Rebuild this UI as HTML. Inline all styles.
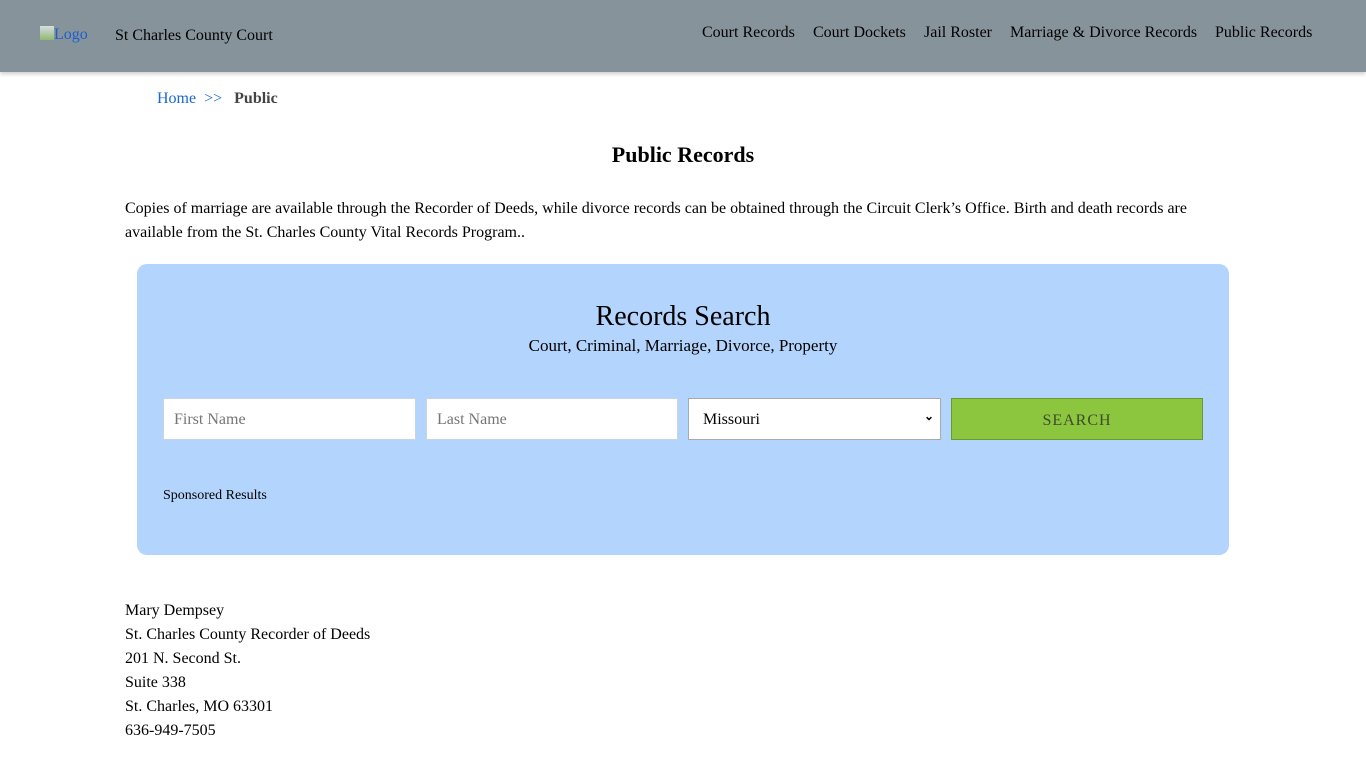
<!DOCTYPE html>
<html><head><meta charset="utf-8"><style>
*{box-sizing:border-box}
body{margin:0;font-family:"Liberation Serif",serif;color:#000;background:#fff;width:1366px;height:768px;overflow:hidden;position:relative}
.hdr{position:absolute;left:0;top:0;width:1366px;height:72px;background:#87939a;box-shadow:0 2px 4px rgba(0,0,0,.2)}
.abs{position:absolute;white-space:nowrap}
.nav{font-size:16px;top:24px}
.panel{position:absolute;left:137px;top:264px;width:1092px;height:291px;background:#b3d4fc;border-radius:10px}
.inp{position:absolute;top:398px;height:42px;background:#fff;border:1px solid #c8d4e0;font-size:16px;color:#757575;padding:12px 10px}
p{margin:0}
</style></head><body>
<div class="hdr"></div>
<div class="abs" style="left:40px;top:26px;font-size:16px;color:#1a5fd0"><span style="display:inline-block;width:14px;height:14px;background:linear-gradient(#d8dde2,#8fb870);vertical-align:-1px"></span>Logo</div>
<div class="abs" style="left:115px;top:27px;font-size:16px">St Charles County Court</div>
<div class="abs nav" style="left:702px">Court Records</div>
<div class="abs nav" style="left:813px">Court Dockets</div>
<div class="abs nav" style="left:924px">Jail Roster</div>
<div class="abs nav" style="left:1010px">Marriage &amp; Divorce Records</div>
<div class="abs nav" style="left:1215px">Public Records</div>
<div class="abs" style="left:157px;top:90px;font-size:16px;color:#1a66d6">Home &nbsp;&gt;&gt;&nbsp;&nbsp; <b style="color:#444">Public</b></div>
<div class="abs" style="left:0;width:1366px;text-align:center;top:142px;font-size:22px;font-weight:bold">Public Records</div>
<div class="abs" style="left:125px;top:197px;width:1095px;white-space:normal;font-size:16px;line-height:24px">Copies of marriage are available through the Recorder of Deeds, while divorce records can be obtained through the Circuit Clerk’s Office. Birth and death records are available from the St. Charles County Vital Records Program..</div>
<div class="panel"></div>
<div class="abs" style="left:0;width:1366px;text-align:center;top:301px;font-size:28px">Records Search</div>
<div class="abs" style="left:0;width:1366px;text-align:center;top:336px;font-size:17px">Court, Criminal, Marriage, Divorce, Property</div>
<div class="inp" style="left:163px;width:253px">First Name</div>
<div class="inp" style="left:426px;width:252px">Last Name</div>
<div class="inp" style="left:688px;width:253px;color:#000;padding-left:14px;border-color:#aaa">Missouri<span style="position:absolute;right:6px;top:10px;font-size:12px;font-weight:bold">&#8964;</span></div>
<div class="abs" style="left:951px;top:398px;width:252px;height:42px;background:#8cc63f;border:1px solid #6a9a30;text-align:center;line-height:43px;font-size:16px;letter-spacing:1px;color:#3d4a2c">SEARCH</div>
<div class="abs" style="left:163px;top:488px;font-size:14px">Sponsored Results</div>
<div class="abs" style="left:125px;top:599px;font-size:16px;line-height:24px">Mary Dempsey<br>St. Charles County Recorder of Deeds<br>201 N. Second St.<br>Suite 338<br>St. Charles, MO 63301<br>636-949-7505</div>
</body></html>
